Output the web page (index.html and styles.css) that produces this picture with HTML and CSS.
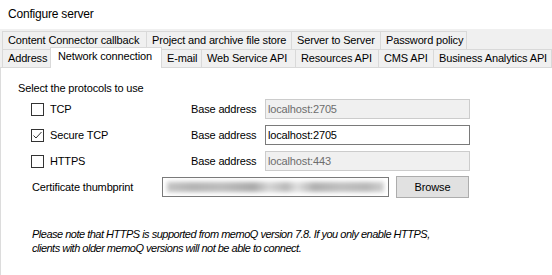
FILE: index.html
```html
<!DOCTYPE html>
<html>
<head>
<meta charset="utf-8">
<link rel="stylesheet" href="styles.css">
</head>
<body>
<div class="title">Configure server</div>
<div class="tabs">
  <div class="tabrow">
    <div class="tab t-ccc">Content Connector callback</div>
    <div class="tab t-paf">Project and archive file store</div>
    <div class="tab t-sts">Server to Server</div>
    <div class="tab t-pwd">Password policy</div>
  </div>
  <div class="tabrow">
    <div class="tab t-addr">Address</div>
    <div class="tab t-net selected">Network connection</div>
    <div class="tab t-mail">E-mail</div>
    <div class="tab t-ws">Web Service API</div>
    <div class="tab t-res">Resources API</div>
    <div class="tab t-cms">CMS API</div>
    <div class="tab t-ba">Business Analytics API</div>
  </div>
</div>
<div class="panel">
  <div class="heading">Select the protocols to use</div>
  <div class="protocols">
    <label class="check"><span class="box"></span><span>TCP</span></label>
    <span class="base">Base address</span>
    <div class="field disabled">localhost:2705</div>

    <label class="check"><span class="box"><svg width="11" height="11" viewBox="0 0 11 11"><polyline points="1.5,5.5 4,8 9.5,2" fill="none" stroke="#333" stroke-width="1"/></svg></span><span>Secure TCP</span></label>
    <span class="base">Base address</span>
    <div class="field">localhost:2705</div>

    <label class="check"><span class="box"></span><span>HTTPS</span></label>
    <span class="base">Base address</span>
    <div class="field disabled">localhost:443</div>
  </div>
  <div class="cert">
    <span class="cert-label">Certificate thumbprint</span>
    <div class="thumb"><div class="blur"></div></div>
    <div class="button">Browse</div>
  </div>
  <p class="note">Please note that HTTPS is supported from memoQ version 7.8. If you only enable HTTPS,<br>clients with older memoQ versions will not be able to connect.</p>
</div>
</body>
</html>
```
FILE: styles.css
```css
html, body {
  margin: 0;
  padding: 0;
  background: #ffffff;
}
body {
  font-family: "Liberation Sans", Arial, sans-serif;
  font-size: 11px;
  letter-spacing: -0.15px;
  color: #000;
  width: 552px;
  height: 275px;
  overflow: hidden;
}
.title {
  height: 29px;
  box-sizing: border-box;
  padding: 7px 0 0 8px;
  font-size: 12px;
  letter-spacing: -0.2px;
  line-height: 14px;
}
.tabs {
  background: #f0f0f0;
  padding: 2px 0 0 2px;
}
.tabrow {
  display: flex;
  height: 18px;
}
.tab {
  box-sizing: border-box;
  height: 18px;
  border: 1px solid #d9d9d9;
  border-bottom: none;
  margin-left: -1px;
  background: #f0f0f0;
  line-height: 17px;
  padding-left: 5px;
  white-space: nowrap;
  overflow: hidden;
}
.tab:first-child { margin-left: 0; }
.t-ccc { width: 145px; }
.t-paf { width: 146px; }
.t-sts { width: 90px; }
.t-pwd { width: 87px; }
.t-addr { width: 49px; }
.t-net { width: 112px; }
.t-mail { width: 41px; }
.t-ws { width: 95px; }
.t-res { width: 84px; }
.t-cms { width: 56px; }
.t-ba { width: 119px; }
.tab.selected {
  position: relative;
  z-index: 1;
  background: #ffffff;
  height: 21px;
  margin-top: -2px;
  line-height: 17px;
  padding-left: 7px;
}
.panel {
  border-top: 1px solid #d9d9d9;
  border-left: 1px solid #dcdcdc;
  height: 208px;
  padding: 13px 0 0 0;
  box-sizing: border-box;
}
.heading {
  line-height: 14px;
  padding-left: 17px;
}
.protocols {
  display: grid;
  grid-template-columns: 160px 74px 205px;
  grid-auto-rows: 20px;
  row-gap: 6px;
  align-items: center;
  padding-left: 30px;
  margin-top: 4px;
}
.check {
  display: flex;
  align-items: center;
  gap: 6px;
}
.box {
  box-sizing: border-box;
  width: 13px;
  height: 13px;
  border: 1px solid #333333;
  background: #ffffff;
  display: flex;
}
.box svg { display: block; }
.field {
  box-sizing: border-box;
  height: 20px;
  border: 1px solid #7a7a7a;
  background: #ffffff;
  line-height: 18px;
  padding-left: 2px;
}
.field.disabled {
  border-color: #cccccc;
  background: #f0f0f0;
  color: #6d6d6d;
}
.cert {
  display: flex;
  align-items: center;
  margin-top: 5px;
  padding-left: 31px;
  height: 22px;
}
.cert-label {
  width: 130px;
}
.thumb {
  box-sizing: border-box;
  width: 227px;
  height: 20px;
  border: 1px solid #7a7a7a;
  background: #ffffff;
  padding: 4px 4px;
  overflow: hidden;
}
.blur {
  height: 10px;
  background: linear-gradient(90deg, #c4c4c4 0%, #b4b4b4 12%, #bdbdbd 25%, #aaaaaa 40%, #d6d6d6 47%, #b9b9b9 55%, #e0e0e0 60%, #b0b0b0 68%, #c0c0c0 80%, #b8b8b8 92%, #d0d0d0 100%);
  filter: blur(2px);
}
.button {
  box-sizing: border-box;
  width: 73px;
  height: 22px;
  margin-left: 7px;
  border: 1px solid #adadad;
  background: #e1e1e1;
  text-align: center;
  line-height: 20px;
}
.note {
  margin: 29px 0 0 31px;
  font-style: italic;
  font-size: 11px;
  letter-spacing: -0.5px;
  line-height: 14px;
}
```
